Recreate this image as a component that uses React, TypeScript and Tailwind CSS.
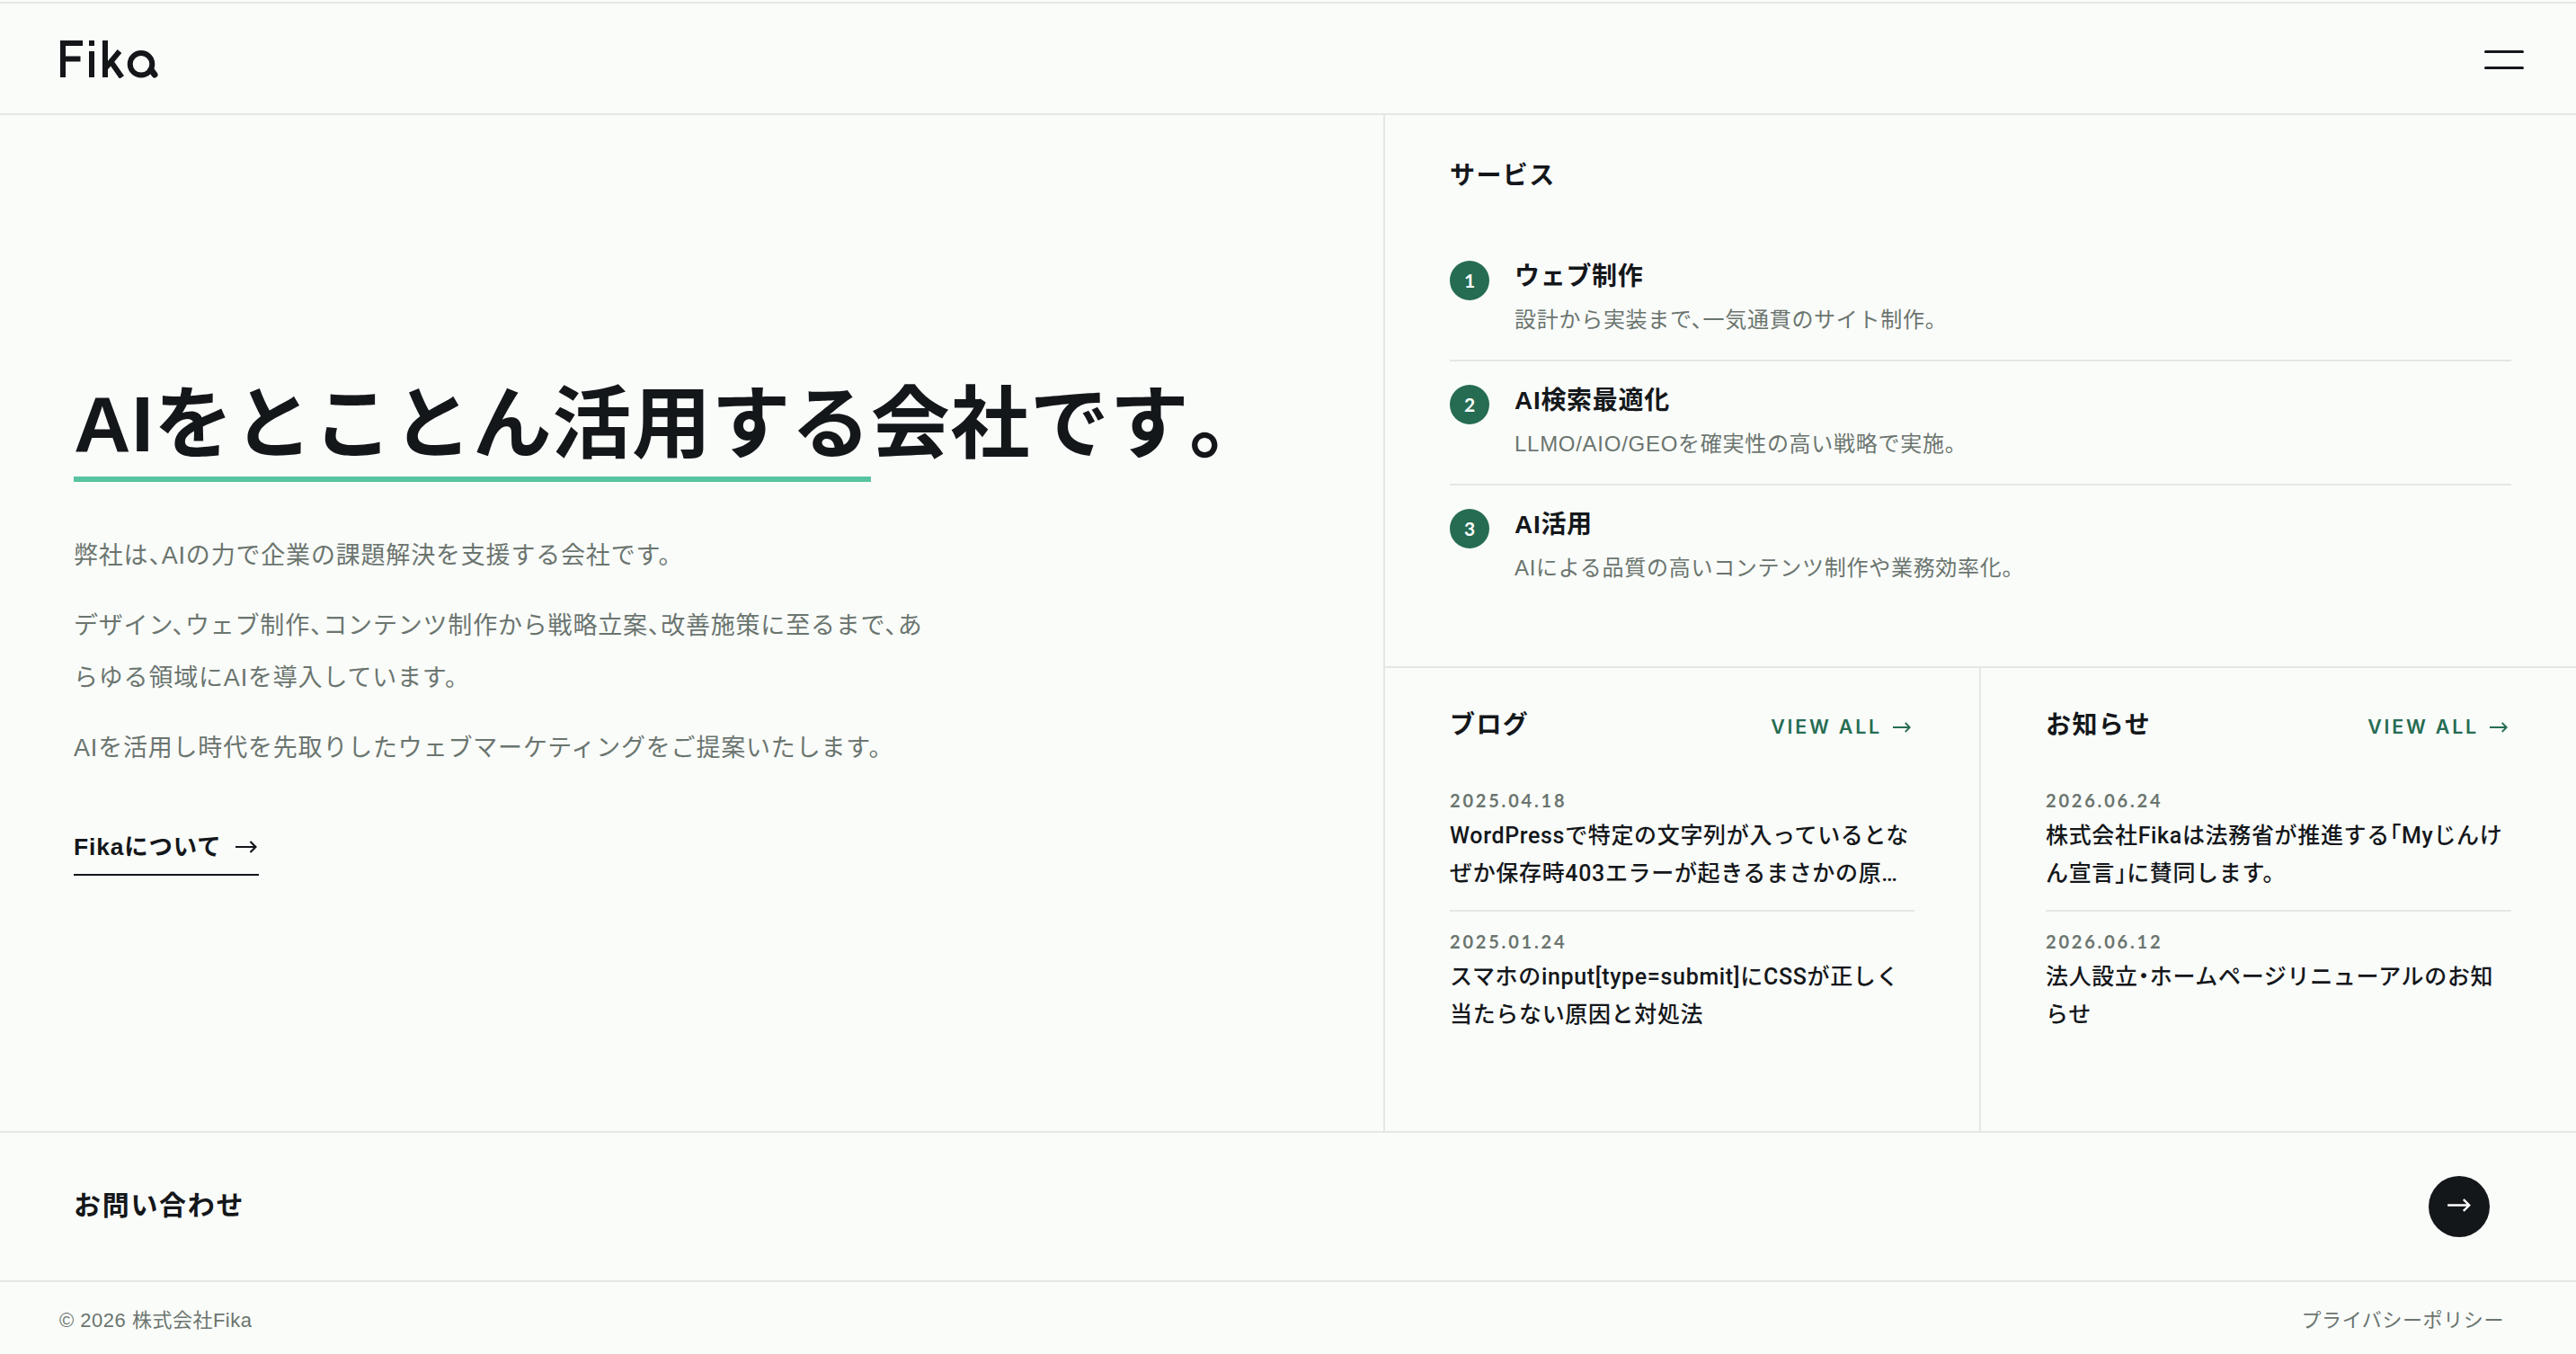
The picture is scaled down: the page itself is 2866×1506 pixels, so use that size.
import clsx from "clsx";

type Service = {
  title: string;
  description: string;
};

type Post = {
  date: string;
  title: string;
};

const services: Service[] = [
  {
    title: "ウェブ制作",
    description: "設計から実装まで、一気通貫のサイト制作。",
  },
  {
    title: "AI検索最適化",
    description: "LLMO/AIO/GEOを確実性の高い戦略で実施。",
  },
  {
    title: "AI活用",
    description: "AIによる品質の高いコンテンツ制作や業務効率化。",
  },
];

const blogPosts: Post[] = [
  {
    date: "2025.04.18",
    title:
      "WordPressで特定の文字列が入っているとなぜか保存時403エラーが起きるまさかの原…",
  },
  {
    date: "2025.01.24",
    title: "スマホのinput[type=submit]にCSSが正しく当たらない原因と対処法",
  },
];

const newsPosts: Post[] = [
  {
    date: "2026.06.24",
    title: "株式会社Fikaは法務省が推進する「Myじんけん宣言」に賛同します。",
  },
  {
    date: "2026.06.12",
    title: "法人設立・ホームページリニューアルのお知らせ",
  },
];

const Arrow = ({ className }: { className: string }) => (
  <svg
    className={clsx("shrink-0", className)}
    viewBox="0 0 24 14"
    fill="none"
    stroke="currentColor"
    strokeWidth="2.2"
  >
    <path d="M0 7h22.500M16.500 1l6 6-6 6" />
  </svg>
);

const Logo = () => (
  <svg
    className="h-[44px] w-[112px]"
    viewBox="0 0 112 44"
    fill="none"
    stroke="currentColor"
    strokeWidth="6"
    role="img"
    aria-label="Fika"
  >
    <path d="M4 43V5M1 5h25M4 22.500h19.500" />
    <path d="M36 43V14M36 8V2" />
    <path d="M51 43V2M52 32L67 14M57 25L69.500 43" />
    <circle cx="91" cy="28.300" r="12.300" />
    <path d="M102 34.500L106 40" strokeWidth="7" strokeLinecap="round" />
  </svg>
);

const Header = () => (
  <header className="flex h-[126px] items-center justify-between border-t-2 border-b-2 border-[#e4e7e4] pr-[58px] pl-[66px]">
    <Logo />
    <button className="mt-[3px] flex flex-col gap-[15px]" aria-label="メニュー">
      <span className="h-[3px] w-[44px] rounded-full bg-[#14171a]" />
      <span className="h-[3px] w-[44px] rounded-full bg-[#14171a]" />
    </button>
  </header>
);

const Hero = () => (
  <section className="flex w-[1541px] shrink-0 flex-col items-start border-r-2 border-[#e4e7e4] pt-[286px] pl-[82px]">
    <h1 className="flex text-[88px] leading-[116px] font-bold tracking-[0.620px] [font-feature-settings:normal] [font-kerning:none]">
      <span className="border-b-6 border-[#57c3a0]">AIをとことん活用する</span>
      <span>会社です。</span>
    </h1>
    <div className="mt-[53px] flex w-[960px] flex-col gap-5 text-[27px] leading-[58px] tracking-[0.810px] text-[#6b756f]">
      <p>弊社は、AIの力で企業の課題解決を支援する会社です。</p>
      <p>
        デザイン、ウェブ制作、コンテンツ制作から戦略立案、改善施策に至るまで、あらゆる領域にAIを導入しています。
      </p>
      <p>
        AIを活用し時代を先取りしたウェブマーケティングをご提案いたします。
      </p>
    </div>
    <a
      href="#about"
      className="mt-[59px] flex items-center gap-[16px] border-b-2 border-[#14171a] pr-[2px] pb-[8px] text-[26.400px] leading-[44px] font-bold tracking-[0.850px]"
    >
      Fikaについて
      <Arrow className="h-[14px] w-[24px]" />
    </a>
  </section>
);

const Services = () => (
  <section className="h-[615px] border-b-2 border-[#e4e7e4] px-[72px] pt-[48px]">
    <h2 className="text-[28px] leading-[40px] font-bold tracking-[1.400px]">
      サービス
    </h2>
    <ol className="mt-[48px]">
      {services.map(({ title, description }, index) => (
        <li
          key={title}
          className={clsx(
            "flex h-[138px] gap-[28px] pt-[26px]",
            index < services.length - 1 && "border-b-2 border-[#e4e7e4]"
          )}
        >
          <span className="grid h-[44px] w-[44px] shrink-0 place-items-center rounded-full bg-[#266c53] pb-[1px] font-['Lato',sans-serif] text-[21px] font-bold text-white">
            {index + 1}
          </span>
          <div>
            <h3 className="text-[28px] leading-[36px] font-bold tracking-[0.700px]">
              {title}
            </h3>
            <p className="mt-[10px] text-[24px] leading-[40px] tracking-[0.720px] text-[#6b756f]">
              {description}
            </p>
          </div>
        </li>
      ))}
    </ol>
  </section>
);

type PostListProps = {
  heading: string;
  posts: Post[];
  className?: string;
};

const PostList = ({ heading, posts, className }: PostListProps) => (
  <section className={clsx("px-[72px] pt-[44px]", className)}>
    <div className="flex items-center justify-between">
      <h2 className="text-[28px] leading-[40px] font-bold tracking-[1.400px]">
        {heading}
      </h2>
      <a
        href="#all"
        className="flex items-center gap-[12px] pt-[3px] pr-[4px] font-['Inter',sans-serif] text-[21.400px] leading-[37px] font-semibold tracking-[2.800px] text-[#266c53]"
      >
        VIEW ALL
        <Arrow className="h-[12px] w-[20px]" />
      </a>
    </div>
    <ul className="mt-[30px]">
      {posts.map(({ date, title }, index) => (
        <li
          key={date}
          className={clsx(
            "h-[157px] pt-[20px]",
            index < posts.length - 1 && "border-b-2 border-[#e4e7e4]"
          )}
        >
          <time className="block font-['Lato',sans-serif] text-[20px] leading-[26px] font-bold tracking-[2.800px] text-[#6b756f]">
            {date}
          </time>
          <p className="mt-[6px] font-['Roboto','Noto_Sans_CJK_JP',sans-serif] text-[25px] leading-[42px] font-medium tracking-[0.660px]">
            {title}
          </p>
        </li>
      ))}
    </ul>
  </section>
);

const Contact = () => (
  <section className="flex h-[168px] items-center justify-between border-y-2 border-[#e4e7e4] pr-[96px] pl-[82px]">
    <h2 className="pb-[4px] text-[30px] font-bold tracking-[1.700px]">
      お問い合わせ
    </h2>
    <a
      href="#contact"
      aria-label="お問い合わせ"
      className="grid h-[68px] w-[68px] place-items-center rounded-full bg-[#14171a] pb-[3px] text-white"
    >
      <Arrow className="h-[15px] w-[26px]" />
    </a>
  </section>
);

const Footer = () => (
  <footer className="flex h-[80px] items-center justify-between pt-[5px] pr-[80px] pl-[66px] text-[22px] tracking-[0.600px] text-[#6b756f]">
    <small className="text-[22px] tracking-[0.500px]">
      © 2026 株式会社Fika
    </small>
    <a href="#privacy">プライバシーポリシー</a>
  </footer>
);

export default function App() {
  return (
    <div
      lang="ja"
      className="flex h-[1506px] w-[2866px] flex-col overflow-hidden bg-[#fafcfa] pt-[2px] font-['Liberation_Sans','Noto_Sans_CJK_JP',sans-serif] text-[#14171a] [font-feature-settings:'halt']"
    >
      <Header />
      <main className="flex flex-col">
        <div className="flex h-[1130px]">
          <Hero />
          <div className="flex flex-1 flex-col">
            <Services />
            <div className="flex flex-1">
              <PostList
                heading="ブログ"
                posts={blogPosts}
                className="w-[663px] border-r-2 border-[#e4e7e4]"
              />
              <PostList
                heading="お知らせ"
                posts={newsPosts}
                className="w-[662px]"
              />
            </div>
          </div>
        </div>
        <Contact />
      </main>
      <Footer />
    </div>
  );
}
